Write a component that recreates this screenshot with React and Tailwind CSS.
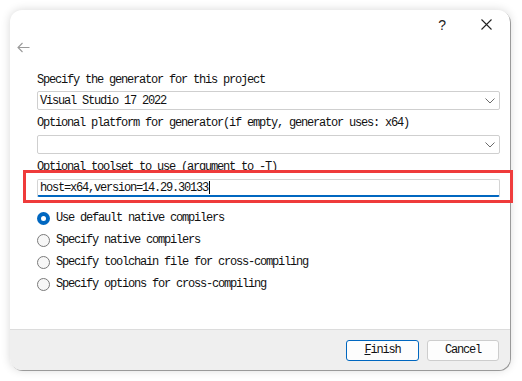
import React from "react";

const mono = "font-['Liberation_Mono',monospace] text-[12px] tracking-[-1.2px] leading-[12px] text-[#111]";

function Chevron() {
  return (
    <svg width="10" height="6" viewBox="0 0 10 6" className="mr-[4px]">
      <path d="M0.5 0.5 L5 5 L9.5 0.5" fill="none" stroke="#6b6b6b" strokeWidth="1" />
    </svg>
  );
}

function Radio({ checked, label }) {
  return (
    <div className="h-[22px] flex items-center">
      {checked ? (
        <div className="w-[13px] h-[13px] rounded-full bg-[#0067c0] flex items-center justify-center">
          <div className="w-[5px] h-[5px] rounded-full bg-white" />
        </div>
      ) : (
        <div className="w-[13px] h-[13px] rounded-full border border-[#7a7a7a] bg-[#f7f7f7]" />
      )}
      <span className={`${mono} ml-[6px]`}>{label}</span>
    </div>
  );
}

export default function App() {
  return (
    <div className="w-[522px] h-[381px] bg-white pt-[10px] pl-[10px]">
      <div className="relative w-[500px] h-[360px] rounded-[12px] bg-white flex flex-col shadow-[1px_1px_0_#9a9a9a,0_0_10px_rgba(0,0,0,0.16)]">
        {/* title bar */}
        <div className="h-[28px] flex items-center justify-end pr-[18px]">
          <span className="font-['Liberation_Sans',sans-serif] text-[14px] text-[#222] mr-[35px] mt-[2px]">?</span>
          <svg width="11" height="11" viewBox="0 0 11 11">
            <path d="M0.5 0.5 L10.5 10.5 M10.5 0.5 L0.5 10.5" stroke="#222" strokeWidth="1.1" />
          </svg>
        </div>
        {/* back arrow */}
        <div className="h-[18px] flex items-center pl-[7px]">
          <svg width="13" height="11" viewBox="0 0 13 11">
            <path d="M12.5 5.5 H1 M5.5 1 L1 5.5 L5.5 10" fill="none" stroke="#9a9a9a" strokeWidth="1.1" />
          </svg>
        </div>
        {/* content */}
        <div className="pl-[27px] pr-[10px] flex flex-col">
          <div className={`${mono} mt-[18px] h-[12px]`}>Specify the generator for this project</div>
          <div className="mt-[5px] h-[19px] border border-[#cfcfcf] rounded-[2px] bg-white flex items-center justify-between pl-[2px]">
            <span className={mono}>Visual Studio 17 2022</span>
            <Chevron />
          </div>
          <div className={`${mono} mt-[7px] h-[12px]`}>Optional platform for generator(if empty, generator uses: x64)</div>
          <div className="mt-[6px] h-[19px] border border-[#cfcfcf] rounded-[2px] bg-white flex items-center justify-end">
            <Chevron />
          </div>
          <div className={`${mono} mt-[7px] h-[12px]`}>Optional toolset to use (argument to -T)</div>
          <div className="mt-[6px] h-[18px] border border-[#d4d4d4] border-b-2 border-b-[#0067c0] rounded-[2px] bg-white flex items-center pl-[2px]">
            <span className={mono}>host=x64,version=14.29.30133</span>
            <span className="w-[1px] h-[13px] bg-black ml-[1px]" />
          </div>
          <div className="mt-[10px] flex flex-col">
            <Radio checked label="Use default native compilers" />
            <Radio label="Specify native compilers" />
            <Radio label="Specify toolchain file for cross-compiling" />
            <Radio label="Specify options for cross-compiling" />
          </div>
        </div>
        <div className="flex-1" />
        {/* footer */}
        <div className="h-[41px] border-t border-[#dcdcdc] bg-[#efefef] rounded-b-[12px] flex items-center justify-end pr-[11px] gap-[8px]">
          <button className="w-[73px] h-[21px] rounded-[3px] border border-[#0067c0] bg-[#fdfdfd] flex items-center justify-center">
            <span className={`${mono} text-[#1a1a40]`}><span className="underline">F</span>inish</span>
          </button>
          <button className="w-[72px] h-[21px] rounded-[3px] border border-[#cdcdcd] bg-[#fdfdfd] flex items-center justify-center">
            <span className={`${mono} text-[#1a1a40]`}>Cancel</span>
          </button>
        </div>
        {/* red annotation box */}
        <div className="absolute left-[13px] top-[160px] w-[490px] h-[33px] border-[3px] border-[#ef3b3b]" />
      </div>
    </div>
  );
}
